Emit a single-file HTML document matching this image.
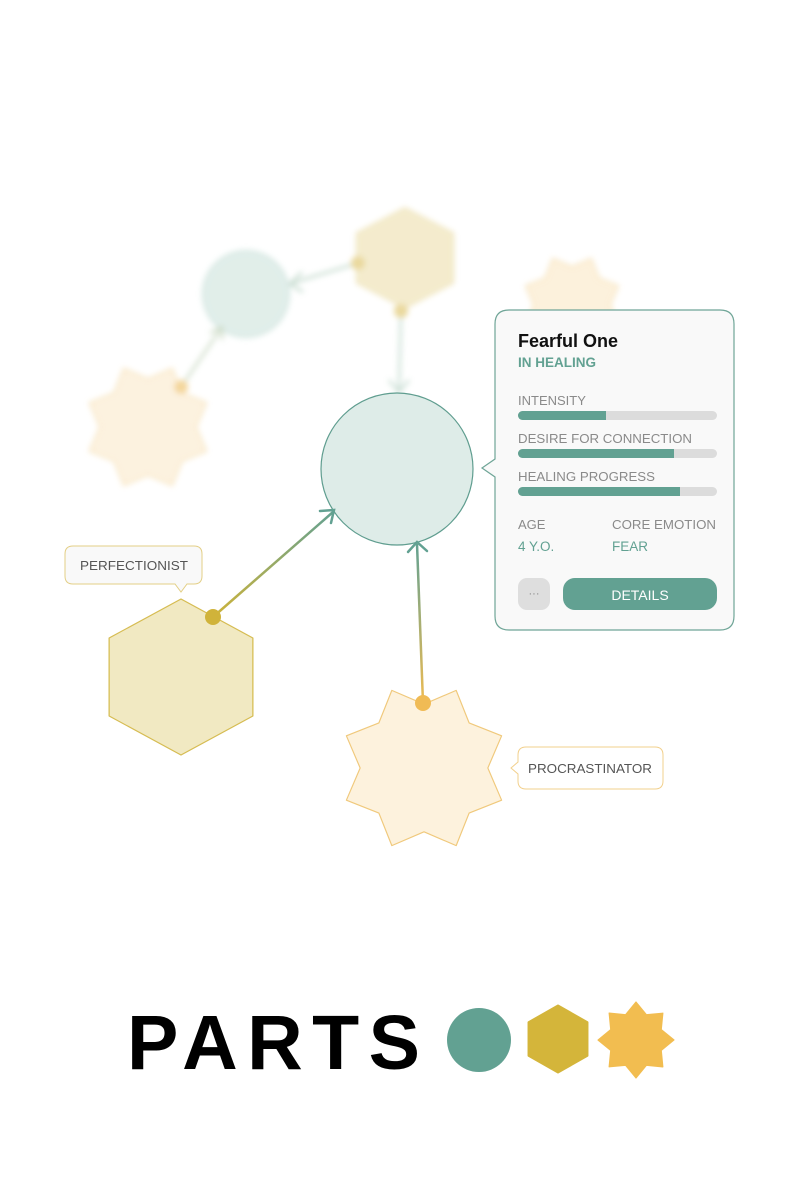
<!DOCTYPE html>
<html><head><meta charset="utf-8"><style>
html,body{margin:0;padding:0;background:#fff;}
svg{display:block;font-family:"Liberation Sans",sans-serif;}
</style></head><body>
<svg width="800" height="1200" viewBox="0 0 800 1200" xmlns="http://www.w3.org/2000/svg">
<defs>
<filter id="bl" x="-30%" y="-30%" width="160%" height="160%"><feGaussianBlur stdDeviation="3"/></filter>
<polygon id="star" points="0,-76 38.3,-92.4 53.7,-53.7 92.4,-38.3 76,0 92.4,38.3 53.7,53.7 38.3,92.4 0,76 -38.3,92.4 -53.7,53.7 -92.4,38.3 -76,0 -92.4,-38.3 -53.7,-53.7 -38.3,-92.4"/>
<polygon id="star2" points="0,-72 38.3,-92.4 50.9,-50.9 92.4,-38.3 72,0 92.4,38.3 50.9,50.9 38.3,92.4 0,72 -38.3,92.4 -50.9,50.9 -92.4,38.3 -72,0 -92.4,-38.3 -50.9,-50.9 -38.3,-92.4"/>
<polygon id="hex" points="0,-100 86.6,-50 86.6,50 0,100 -86.6,50 -86.6,-50"/>
<linearGradient id="g1" x1="213" y1="617" x2="335" y2="510" gradientUnits="userSpaceOnUse"><stop offset="0" stop-color="#cdb33a"/><stop offset="1" stop-color="#62a192"/></linearGradient>
<linearGradient id="g2" x1="423" y1="703" x2="417" y2="542" gradientUnits="userSpaceOnUse"><stop offset="0" stop-color="#edbb52"/><stop offset="1" stop-color="#62a192"/></linearGradient>
</defs>

<g filter="url(#bl)" opacity="0.85">
  <g transform="translate(572,305) scale(0.5)"><use href="#star" fill="#fcefd6" stroke="#f3d9a6" stroke-width="3"/></g>
  <circle cx="246" cy="294" r="43" fill="#dcebe6" stroke="#c8e0d9" stroke-width="2"/>
  <g transform="translate(405,258) scale(0.555,0.5)"><use href="#hex" fill="#f2e8c4" stroke="#eadca6" stroke-width="3"/></g>
  <g transform="translate(148,427) scale(0.63)"><use href="#star" fill="#fcf0da" stroke="#f6e0b4" stroke-width="3"/></g>
  <line x1="358" y1="263" x2="292" y2="283" stroke="#b9d3c4" stroke-width="2.5"/>
  <polyline points="302,272 290,284 303,292" fill="none" stroke="#b9d3c4" stroke-width="2.5"/>
  <line x1="401" y1="311" x2="399" y2="390" stroke="#bcd6c9" stroke-width="2.5"/>
  <polyline points="389,380 399,392 409,380" fill="none" stroke="#bcd6c9" stroke-width="2.5"/>
  <line x1="181" y1="387" x2="220" y2="330" stroke="#c5d5bd" stroke-width="2.5"/>
  <polyline points="210,333 222,327 222,340" fill="none" stroke="#c5d5bd" stroke-width="2.5"/>
  <circle cx="358" cy="263" r="7" fill="#e6d28c"/>
  <circle cx="401" cy="311" r="7" fill="#e6d28c"/>
  <circle cx="181" cy="387" r="7" fill="#f2cf8a"/>
</g>

<circle cx="397" cy="469" r="76" fill="#deece8" stroke="#5f9d8f" stroke-width="1.2"/>

<g transform="translate(181,677) scale(0.83,0.78)"><use href="#hex" fill="#f1e9c2" stroke="#d6bc52" stroke-width="1.5" stroke-linejoin="round"/></g>
<g transform="translate(424,768) scale(0.84)"><use href="#star" fill="#fdf2dd" stroke="#f0c97c" stroke-width="1.4" stroke-linejoin="round"/></g>

<line x1="213" y1="617" x2="333" y2="512" stroke="url(#g1)" stroke-width="2.5"/>
<polyline points="320,511 334,510 331,523" fill="none" stroke="#62a192" stroke-width="2.5" stroke-linecap="round"/>
<line x1="423" y1="703" x2="417" y2="544" stroke="url(#g2)" stroke-width="2.5"/>
<polyline points="408,552 417,542 427,551" fill="none" stroke="#62a192" stroke-width="2.5" stroke-linecap="round"/>
<circle cx="213" cy="617" r="8" fill="#d0b33a"/>
<circle cx="423" cy="703" r="8" fill="#f0bb55"/>

<path d="M73,546 H194 Q202,546 202,554 V576 Q202,584 194,584 H187 L181,592 L175,584 H73 Q65,584 65,576 V554 Q65,546 73,546 Z" fill="#f9f9f9" stroke="#e3cf86" stroke-width="1"/>
<text x="80" y="570" font-size="13" fill="#555" textLength="108" lengthAdjust="spacingAndGlyphs">PERFECTIONIST</text>

<path d="M526,747 H655 Q663,747 663,755 V781 Q663,789 655,789 H526 Q518,789 518,781 V774 L511,768 L518,762 V755 Q518,747 526,747 Z" fill="#fff" stroke="#f2d08c" stroke-width="1"/>
<text x="528" y="773" font-size="13" fill="#555" textLength="124" lengthAdjust="spacingAndGlyphs">PROCRASTINATOR</text>

<path d="M509,310 H720 Q734,310 734,324 V616 Q734,630 720,630 H509 Q495,630 495,616 V477 L482,468 L495,459 V324 Q495,310 509,310 Z" fill="#f9f9f9" stroke="#6fa597" stroke-width="1.2"/>
<text x="518" y="347" font-size="18" font-weight="bold" fill="#111">Fearful One</text>
<text x="518" y="367" font-size="13.5" font-weight="bold" fill="#62a192">IN HEALING</text>
<text x="518" y="405" font-size="13" fill="#8a8a8a">INTENSITY</text>
<rect x="518" y="411" width="199" height="9" rx="4.5" fill="#dcdcdc"/>
<rect x="518" y="411" width="88" height="9" rx="4.5" fill="#62a192"/>
<rect x="590" y="411" width="16" height="9" fill="#62a192"/>
<text x="518" y="443" font-size="13" fill="#8a8a8a" textLength="174" lengthAdjust="spacingAndGlyphs">DESIRE FOR CONNECTION</text>
<rect x="518" y="449" width="199" height="9" rx="4.5" fill="#dcdcdc"/>
<rect x="518" y="449" width="156" height="9" rx="4.5" fill="#62a192"/>
<rect x="660" y="449" width="14" height="9" fill="#62a192"/>
<text x="518" y="481" font-size="13" fill="#8a8a8a" textLength="137" lengthAdjust="spacingAndGlyphs">HEALING PROGRESS</text>
<rect x="518" y="487" width="199" height="9" rx="4.5" fill="#dcdcdc"/>
<rect x="518" y="487" width="162" height="9" rx="4.5" fill="#62a192"/>
<rect x="666" y="487" width="14" height="9" fill="#62a192"/>
<text x="518" y="529" font-size="13" fill="#8a8a8a">AGE</text>
<text x="612" y="529" font-size="13" fill="#8a8a8a" textLength="104" lengthAdjust="spacingAndGlyphs">CORE EMOTION</text>
<text x="518" y="551" font-size="13.5" fill="#62a192">4 Y.O.</text>
<text x="612" y="551" font-size="13.5" fill="#62a192">FEAR</text>
<rect x="518" y="578" width="32" height="32" rx="9" fill="#dedede"/>
<text x="534" y="597" font-size="11" fill="#888" text-anchor="middle">···</text>
<rect x="563" y="578" width="154" height="32" rx="12" fill="#62a192"/>
<text x="640" y="600" font-size="14" fill="#fff" text-anchor="middle">DETAILS</text>

<text x="127" y="1069" font-size="77" font-weight="bold" fill="#000" textLength="293" lengthAdjust="spacing">PARTS</text>
<circle cx="479" cy="1040" r="32" fill="#62a192"/>
<g transform="translate(558,1039) scale(0.34,0.335)"><use href="#hex" fill="#d4b53a" stroke="#d4b53a" stroke-width="6" stroke-linejoin="round"/></g>
<g transform="translate(636,1040) rotate(22.5) scale(0.38)"><use href="#star2" fill="#f2bd50" stroke="#f2bd50" stroke-width="3" stroke-linejoin="round"/></g>
</svg>
</body></html>
